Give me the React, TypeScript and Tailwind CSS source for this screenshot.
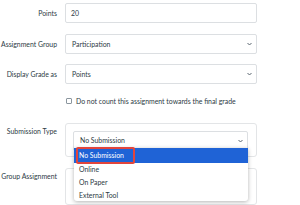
import React from 'react';

function Chevron() {
  return (
    <svg width="5" height="4" viewBox="0 0 10 8" className="shrink-0">
      <path d="M1 2 L5 6 L9 2" fill="none" stroke="#5b6670" strokeWidth="2" />
    </svg>
  );
}

function Row({ label, children, top = false }: { label: string; children: React.ReactNode; top?: boolean }) {
  return (
    <div className={top ? 'flex items-start' : 'flex items-center'}>
      <div className={`w-[58px] shrink-0 text-right whitespace-nowrap pr-[1px] text-[#2d3b45] ${top ? 'pt-[5px]' : ''}`}>{label}</div>
      <div className="ml-[7px] w-[192px]">{children}</div>
    </div>
  );
}

function SelectBox({ value, className = '' }: { value: string; className?: string }) {
  return (
    <div className={`flex items-center justify-between h-[20px] border border-[#dcdfe2] rounded-[2px] bg-white pl-[6px] pr-[4px] ${className}`}>
      <span className="text-[#2d3b45]">{value}</span>
      <Chevron />
    </div>
  );
}

export default function App() {
  return (
    <div className="relative w-[300px] h-[205px] bg-white overflow-hidden text-[6.9px] leading-none" style={{ fontFamily: 'Lato, "Open Sans", sans-serif' }}>
      <div className="pt-[3px] flex flex-col">
        <Row label="Points">
          <div className="h-[20px] border border-[#dcdfe2] rounded-[2px] flex items-center pl-[5px] text-[#2d3b45]">20</div>
        </Row>
        <div className="mt-[11px]">
          <Row label="Assignment Group">
            <SelectBox value="Participation" />
          </Row>
        </div>
        <div className="mt-[10px]">
          <Row label="Display Grade as">
            <SelectBox value="Points" />
          </Row>
        </div>
        <div className="mt-[14px] ml-[66px] flex items-center gap-[4px] text-[#2d3b45]">
          <div className="w-[6px] h-[6px] border border-[#8b969e] rounded-[1px] bg-white" />
          <span>Do not count this assignment towards the final grade</span>
        </div>
        <div className="mt-[18px]">
          <Row label="Submission Type" top>
            <div className="border border-[#e3e5e7] rounded-[3px] pt-[7px] pb-[7px] pl-[7px] pr-[8px] h-[34px]">
              <SelectBox value="No Submission" className="h-[19px]" />
            </div>
          </Row>
        </div>
        <div className="mt-[11px]">
          <Row label="Group Assignment" top>
            <div className="border border-[#e3e5e7] rounded-[3px] h-[37px]" />
          </Row>
        </div>
      </div>

      <div className="absolute left-[74px] top-[148px] w-[174px] h-[53px] bg-white rounded-b-[3px] shadow-[0_1px_4px_rgba(0,0,0,0.3)] text-[#2d3b45]">
        <div className="relative h-[15px] bg-[#1f63d6] text-white flex items-center pl-[5px]">
          No Submission
          <div className="absolute left-[2px] top-[-1px] w-[59px] h-[17px] border-2 border-[#e2453c] rounded-[2px]" />
        </div>
        <div className="h-[13px] flex items-center pl-[5px]">Online</div>
        <div className="h-[13px] flex items-center pl-[5px]">On Paper</div>
        <div className="h-[13px] flex items-center pl-[5px]">External Tool</div>
      </div>
    </div>
  );
}
